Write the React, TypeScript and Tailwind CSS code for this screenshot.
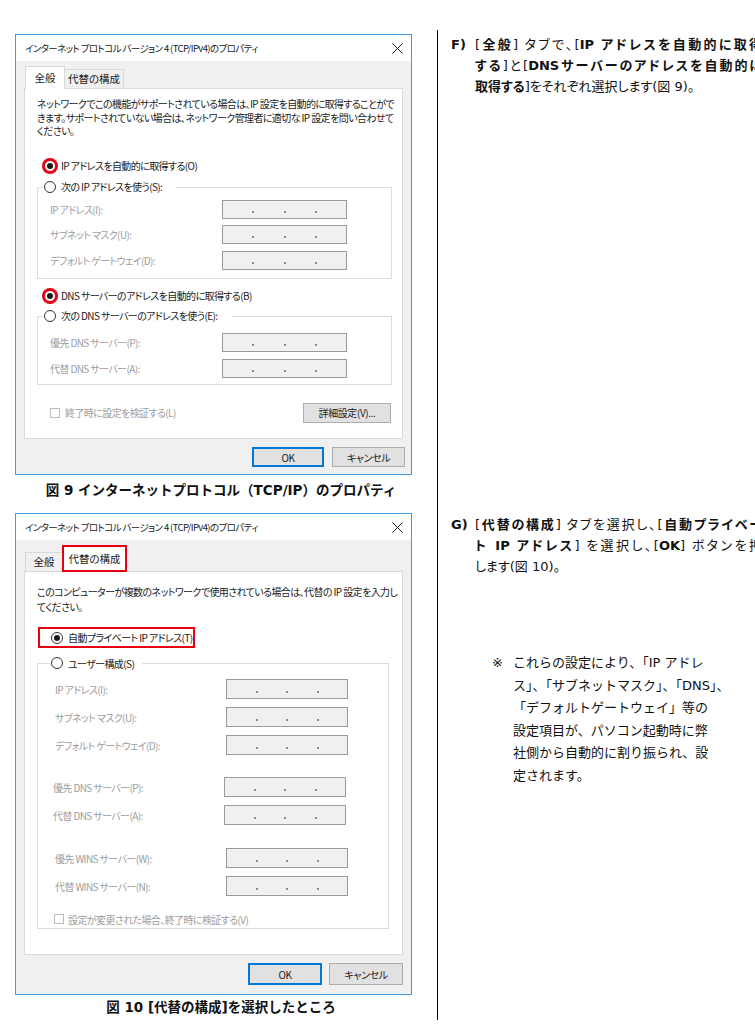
const ui = "font-['Noto_Sans_CJK_JP',sans-serif] [font-feature-settings:'palt'] whitespace-nowrap"
const doc = "font-['DejaVu_Sans','Noto_Sans_CJK_JP',sans-serif]"
// justified line, the way the word processor spreads every line but the last
const just = "text-justify [text-align-last:justify]"

function CloseIcon() {
  return (
    <svg width="11" height="11" viewBox="0 0 11 11" className="text-[#222]">
      <path d="M0.5 0.5L10.5 10.5M10.5 0.5L0.5 10.5" stroke="currentColor" strokeWidth="1" fill="none" />
    </svg>
  )
}

function TitleBar() {
  return (
    <div className="flex h-[26px] items-center justify-between bg-white pl-[9px] pr-[8px] text-[9.5px] tracking-[-0.6px] text-[#1a1a1a]">
      <span>インターネット プロトコル バージョン 4 (TCP/IPv4)のプロパティ</span>
      <CloseIcon />
    </div>
  )
}

function Radio({ on, ring }: { on?: boolean; ring?: boolean }) {
  return (
    <span
      className={`flex h-[12px] w-[12px] shrink-0 items-center justify-center rounded-full border bg-white ${
        ring ? 'border-[#e60012] ring-2 ring-[#e60012]' : 'border-[#333]'
      }`}
    >
      {on && <span className="h-[6px] w-[6px] rounded-full bg-[#1a1a1a]" />}
    </span>
  )
}

function Check() {
  return <span className="h-[10px] w-[10px] shrink-0 border border-[#bcbcbc] bg-white" />
}

// disabled ip address box with the three dots
function IpBox({ className }: { className: string }) {
  return (
    <div className={`flex items-end justify-evenly border border-[#9a9a9a] bg-[#f0f0f0] pb-[5px] ${className}`}>
      <span className="h-[2px] w-[2px] bg-[#8a8a8a]" />
      <span className="h-[2px] w-[2px] bg-[#8a8a8a]" />
      <span className="h-[2px] w-[2px] bg-[#8a8a8a]" />
    </div>
  )
}

function Field({ label, labelCls, boxCls, rowCls }: { label: string; labelCls: string; boxCls: string; rowCls: string }) {
  return (
    <div className={`flex items-center ${rowCls}`}>
      <span className={`shrink-0 text-[#9d9d9d] ${labelCls}`}>{label}</span>
      <IpBox className={boxCls} />
    </div>
  )
}

function Btn({ children, className }: { children: string; className: string }) {
  return (
    <div className={`flex items-center justify-center bg-[#e1e1e1] text-[10px] tracking-[-0.4px] text-[#1a1a1a] ${className}`}>
      {children}
    </div>
  )
}

function Dialog1() {
  const f1 = { labelCls: 'w-[184px] pl-[12px]', boxCls: 'h-[19px] w-[125px]', rowCls: 'h-[19px]' }
  return (
    <div className={`${ui} h-[441px] w-[397px] border border-[#3b9ae6] bg-[#f0f0f0]`}>
      <TitleBar />
      <div className="flex h-[27px] items-end pl-[9px] text-[10.5px] text-[#1a1a1a]">
        <div className="relative z-10 -mb-px flex h-[23px] w-[40px] items-center justify-center border border-b-0 border-[#d9d9d9] bg-white">
          全般
        </div>
        <div className="flex h-[19px] w-[59px] items-center justify-center border border-b-0 border-l-0 border-[#d9d9d9]">
          代替の構成
        </div>
      </div>
      <div className="ml-[8px] h-[351px] w-[379px] border border-[#d9d9d9] bg-white text-[10px] tracking-[-0.6px] text-[#1a1a1a]">
        <div className="pl-[12px] pt-[8px] leading-[13.5px]">
          <p>ネットワークでこの機能がサポートされている場合は、IP 設定を自動的に取得することがで</p>
          <p>きます。サポートされていない場合は、ネットワーク管理者に適切な IP 設定を問い合わせて</p>
          <p>ください。</p>
        </div>
        <div className="mt-[20px] flex h-[16px] items-center gap-[5px] pl-[19px]">
          <Radio on ring />
          <span>IP アドレスを自動的に取得する(O)</span>
        </div>
        <div className="ml-[12px] mt-[13px] w-[355px] border border-[#dcdcdc] pb-[8px]">
          <div className="-mt-[9px] ml-[5px] flex h-[16px] w-fit items-center gap-[5px] bg-white pl-[1px] pr-[14px]">
            <Radio />
            <span>次の IP アドレスを使う(S):</span>
          </div>
          <div className="mt-[5px] flex flex-col gap-[6.5px]">
            <Field label="IP アドレス(I):" {...f1} />
            <Field label="サブネット マスク(U):" {...f1} />
            <Field label="デフォルト ゲートウェイ(D):" {...f1} />
          </div>
        </div>
        <div className="mt-[9px] flex h-[16px] items-center gap-[5px] pl-[19px]">
          <Radio on ring />
          <span>DNS サーバーのアドレスを自動的に取得する(B)</span>
        </div>
        <div className="ml-[12px] mt-[12px] w-[355px] border border-[#dcdcdc] pb-[6px]">
          <div className="-mt-[9px] ml-[5px] flex h-[16px] w-fit items-center gap-[5px] bg-white pl-[1px] pr-[14px]">
            <Radio />
            <span>次の DNS サーバーのアドレスを使う(E):</span>
          </div>
          <div className="mt-[9px] flex flex-col gap-[7px]">
            <Field label="優先 DNS サーバー(P):" {...f1} />
            <Field label="代替 DNS サーバー(A):" {...f1} />
          </div>
        </div>
        <div className="mt-[18px] flex h-[20px] items-center justify-between pl-[25px] pr-[11px]">
          <div className="flex items-center gap-[5px] text-[#9d9d9d]">
            <Check />
            <span>終了時に設定を検証する(L)</span>
          </div>
          <Btn className="h-[20px] w-[88px] border border-[#adadad]">詳細設定(V)...</Btn>
        </div>
      </div>
      <div className="mt-[8px] flex justify-end gap-[8px] pr-[6px]">
        <Btn className="h-[20px] w-[72px] border-2 border-[#0078d7]">OK</Btn>
        <Btn className="h-[20px] w-[73px] border border-[#adadad]">キャンセル</Btn>
      </div>
    </div>
  )
}

function Dialog2() {
  const fa = { labelCls: 'w-[188px] pl-[17px]', boxCls: 'h-[20px] w-[122px]', rowCls: 'h-[20px]' }
  const fb = { labelCls: 'w-[186px] pl-[15px]', boxCls: 'h-[20px] w-[122px]', rowCls: 'h-[20px]' }
  return (
    <div className={`${ui} mt-[15px] h-[482px] w-[397px] border border-[#3b9ae6] bg-[#f0f0f0]`}>
      <TitleBar />
      <div className="flex h-[31px] items-end pl-[9px] text-[10.5px] text-[#1a1a1a]">
        <div className="flex h-[19px] w-[37px] items-center justify-center border border-b-0 border-r-0 border-[#d9d9d9]">
          全般
        </div>
        <div className="relative z-10 -mb-px flex h-[27px] w-[65px] items-center justify-center border-2 border-[#e60012] bg-white">
          代替の構成
        </div>
      </div>
      <div className="ml-[8px] h-[384px] w-[379px] border border-[#d9d9d9] bg-white text-[10px] tracking-[-0.6px] text-[#1a1a1a]">
        <div className="pl-[12px] pt-[12px] leading-[15px]">
          <p>このコンピューターが複数のネットワークで使用されている場合は、代替の IP 設定を入力し</p>
          <p>てください。</p>
        </div>
        <div className="ml-[13px] mt-[13px] flex h-[21px] w-[157px] items-center gap-[5px] border-2 border-[#e60012] pl-[11px]">
          <Radio on />
          <span>自動プライベート IP アドレス(T)</span>
        </div>
        <div className="ml-[12px] mt-[15px] w-[352px] border border-[#dcdcdc] pb-[2px]">
          <div className="-mt-[9px] ml-[12px] flex h-[16px] w-fit items-center gap-[5px] bg-white pl-[1px] pr-[8px]">
            <Radio />
            <span>ユーザー構成(S)</span>
          </div>
          <div className="mt-[8px] flex flex-col gap-[8px]">
            <Field label="IP アドレス(I):" {...fa} />
            <Field label="サブネット マスク(U):" {...fa} />
            <Field label="デフォルト ゲートウェイ(D):" {...fa} />
          </div>
          <div className="mt-[22px] flex flex-col gap-[8px]">
            <Field label="優先 DNS サーバー(P):" {...fb} />
            <Field label="代替 DNS サーバー(A):" {...fb} />
          </div>
          <div className="mt-[23px] flex flex-col gap-[8px]">
            <Field label="優先 WINS サーバー(W):" {...fa} />
            <Field label="代替 WINS サーバー(N):" {...fa} />
          </div>
          <div className="mt-[16px] flex h-[14px] items-center gap-[4px] pl-[16px] text-[#9d9d9d]">
            <Check />
            <span>設定が変更された場合、終了時に検証する(V)</span>
          </div>
        </div>
      </div>
      <div className="mt-[8px] flex justify-end gap-[7px] pr-[8px]">
        <Btn className="h-[22px] w-[74px] border-2 border-[#0078d7]">OK</Btn>
        <Btn className="h-[22px] w-[74px] border border-[#adadad]">キャンセル</Btn>
      </div>
    </div>
  )
}

export default function App() {
  return (
    <div className="h-[1030px] w-[755px] overflow-hidden bg-white">
      <div className="mt-[30px] flex h-[990px]">
        <div className="h-full w-[438px] shrink-0 border-r border-black pl-[15px] pt-[4px]">
          <Dialog1 />
          <p className={`${doc} mt-[7px] h-[16px] w-[412px] text-center text-[13.5px] font-bold leading-[16px] text-[#111]`}>
            図 9 インターネットプロトコル（TCP/IP）のプロパティ
          </p>
          <Dialog2 />
          <p className={`${doc} mt-[4px] h-[16px] w-[412px] text-center text-[13.5px] font-bold leading-[16px] text-[#111]`}>
            図 10 [代替の構成]を選択したところ
          </p>
        </div>

        <div className={`${doc} min-w-0 flex-1 overflow-hidden text-[#111]`}>
          {/* F */}
          <div className="flex pl-[13px] pt-[4px] text-[13px] leading-[21px]">
            <span className="w-[24px] shrink-0 font-bold">F)</span>
            <div className="w-[287px] shrink-0 whitespace-nowrap [font-feature-settings:'palt']">
              <div className={just}>
                [<b>全般</b>] タブで、[<b>IP アドレスを自動的に取得</b>
              </div>
              <div className={just}>
                <b>する</b>]と[<b>DNSサーバーのアドレスを自動的に</b>
              </div>
              <div>
                <b>取得する</b>]をそれぞれ選択します(図 9)。
              </div>
            </div>
          </div>

          {/* G */}
          <div className="mt-[417px] flex pl-[13px] text-[13px] leading-[21px]">
            <span className="w-[24px] shrink-0 font-bold">G)</span>
            <div className="w-[287px] shrink-0 whitespace-nowrap [font-feature-settings:'palt']">
              <div className={just}>
                [<b>代替の構成</b>] タブを選択し、[<b>自動プライベー</b>
              </div>
              <div className={just}>
                <b>ト IP アドレス</b>] を選択し、[<b>OK</b>] ボタンを押
              </div>
              <div>します(図 10)。</div>
            </div>
          </div>

          {/* note */}
          <div className="mt-[75px] flex pl-[54px] text-[13px] leading-[22.5px]">
            <span className="w-[21px] shrink-0">※</span>
            <div className="whitespace-nowrap">
              これらの設定により、「IP アドレ
              <br />
              ス」、「サブネットマスク」、「DNS」、
              <br />
              「デフォルトゲートウェイ」等の
              <br />
              設定項目が、パソコン起動時に弊
              <br />
              社側から自動的に割り振られ、設
              <br />
              定されます。
            </div>
          </div>
        </div>
      </div>
    </div>
  )
}
